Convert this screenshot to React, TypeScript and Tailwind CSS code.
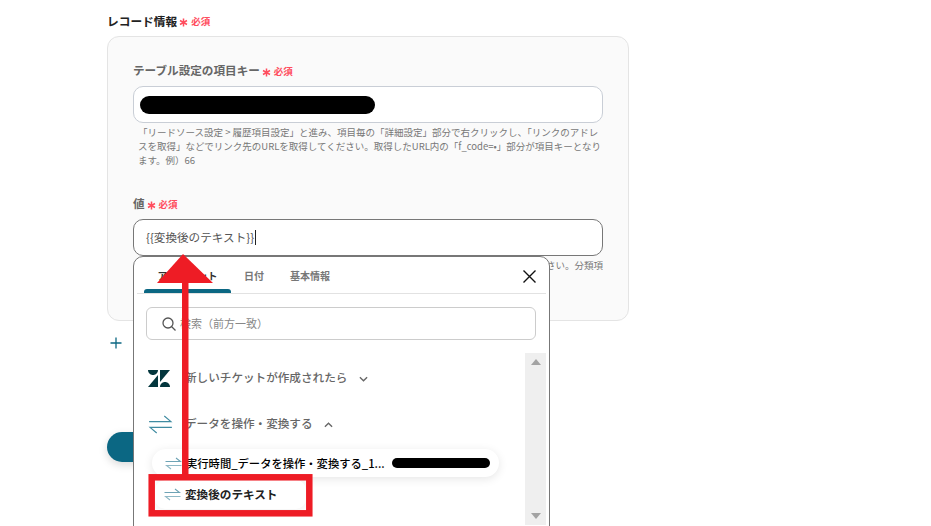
const font = "font-['Noto_Sans_CJK_JP','Noto_Sans',sans-serif]"

function Required() {
  return (
    <span className="ml-[2px] inline-flex items-center text-[#ff4d5e] font-bold">
      <svg viewBox="0 0 9 9" stroke="currentColor" strokeWidth="1.500" className="w-[9px] h-[9px] mt-[3px]">
        <path d="M4.500 0.500v8M1 2.500l7 4M8 2.500l-7 4" />
      </svg>
      <span className="ml-[3px] text-[9.500px] leading-[12px]">必須</span>
    </span>
  )
}

function SwapIcon({ className = "" }: { className?: string }) {
  return (
    <svg viewBox="0 0 26 20" fill="none" stroke="#3f8ba1" strokeWidth="1.200" className={className}>
      <path d="M1 7h23L17 1" />
      <path d="M25 13H2l7 6" />
    </svg>
  )
}

function SmallSwapIcon() {
  return (
    <svg viewBox="0 0 17 13" fill="none" className="w-[17px] h-[13px] shrink-0">
      <path d="M0.500 4.500h15L11 1" stroke="#6ea3b5" strokeWidth="1.100" />
      <path d="M16.500 8.500h-15L6 12" stroke="#8fb9c6" strokeWidth="1.100" />
    </svg>
  )
}

function ZendeskIcon() {
  return (
    <svg viewBox="0 0 22 17" className="w-[22px] h-[17px] shrink-0" fill="#03363d">
      <path d="M10 0H0c0 2.800 2.200 5 5 5s5-2.200 5-5z" />
      <path d="M10 5v12H0z" />
      <path d="M12 17c0-2.800 2.200-5 5-5s5 2.200 5 5z" />
      <path d="M12 12V0h10z" />
    </svg>
  )
}

function Popup() {
  return (
    <div className="absolute left-0 top-[37px] w-[417px] h-[290px] bg-white border border-[#777] rounded-t-[10px] overflow-hidden">
      <div className="mx-[3px] h-[37px] flex border-b border-[#e2e2e2] relative">
        <div className="ml-[7px] w-[87px] h-[36px]">
          <div className="h-[32px] text-center text-[10px] font-bold text-[#333] leading-[37px]">アウトプット</div>
          <div className="h-[4px] bg-[#0b6783] rounded-t-[3px]" />
        </div>
        <div className="ml-[13px] text-[10px] font-bold text-[#777] leading-[37px]">日付</div>
        <div className="ml-[26px] text-[10px] font-bold text-[#777] leading-[37px]">基本情報</div>
        <svg viewBox="0 0 13 13" className="absolute right-[10px] top-[13px] w-[13px] h-[13px]" stroke="#111" strokeWidth="1.400">
          <path d="M0.500 0.500l12 12M12.500 0.500l-12 12" />
        </svg>
      </div>

      <div className="mt-[13px] ml-[12px] mr-[13px] h-[33px] border border-[#ccc] rounded-[6px] flex items-center pl-[15px]">
        <svg viewBox="0 0 14 14" fill="none" stroke="#555" strokeWidth="1.300" className="w-[14px] h-[14px]">
          <circle cx="6" cy="6" r="5" />
          <path d="M9.500 9.500L13.500 13.500" />
        </svg>
        <span className="ml-[4px] text-[11px] text-[#888]">検索（前方一致）</span>
      </div>

      <div className="flex mt-[13px]">
        <div className="flex-1 min-w-0 pl-[14px]">
          <div className="h-[50px] flex items-center">
            <ZendeskIcon />
            <span className="ml-[15px] text-[11.600px] text-[#666] font-medium">新しいチケットが作成されたら</span>
            <svg viewBox="0 0 10 6" fill="none" stroke="#666" strokeWidth="1.500" className="ml-[12px] w-[9px] h-[6px] mt-[2px]">
              <path d="M1 1l4 4 4-4" />
            </svg>
          </div>
          <div className="h-[42px] flex items-center">
            <SwapIcon className="w-[25px] h-[19px] shrink-0" />
            <span className="ml-[12px] text-[11.600px] text-[#666] font-medium">データを操作・変換する</span>
            <svg viewBox="0 0 10 6" fill="none" stroke="#666" strokeWidth="1.500" className="ml-[11px] w-[9px] h-[6px] mt-[2px]">
              <path d="M1 5l4-4 4 4" />
            </svg>
          </div>
          <div className="mt-[4px] ml-[4px] w-[347px] h-[28px] rounded-full bg-white shadow-[0_2px_10px_rgba(0,0,0,0.1)] flex items-center pl-[13px]">
            <SmallSwapIcon />
            <span className="ml-[4px] text-[11.300px] font-medium text-black whitespace-nowrap">実行時間_データを操作・変換する_1...</span>
            <span className="ml-[7px] w-[98px] h-[10px] rounded-full bg-black" />
          </div>
          <div className="mt-[3px] ml-[7px] w-[151px] h-[29px] rounded-[10px] bg-white shadow-[0_1px_6px_rgba(0,0,0,0.06)] flex items-center pl-[9px]">
            <SmallSwapIcon />
            <span className="ml-[4px] text-[11.600px] font-bold text-[#222] whitespace-nowrap">変換後のテキスト</span>
          </div>
        </div>
        <div className="w-[21px] h-[172px] mr-[3px] bg-[#efefef] flex flex-col items-center justify-between py-[6px] shrink-0">
          <span className="w-0 h-0 border-x-[5px] border-x-transparent border-b-[6px] border-b-[#a3a3a3]" />
          <span className="w-0 h-0 border-x-[5px] border-x-transparent border-t-[6px] border-t-[#a3a3a3]" />
        </div>
      </div>
    </div>
  )
}

function Overlay() {
  return (
    <svg viewBox="0 0 931 526" className="absolute inset-0 w-[931px] h-[526px] pointer-events-none">
      <rect x="182" y="280" width="6.500" height="196" fill="#ee1c25" />
      <path d="M157 283L183 254 213 283z" fill="#ee1c25" />
      <rect x="151.700" y="477.300" width="157.600" height="36" fill="none" stroke="#ee1c25" strokeWidth="6.500" />
    </svg>
  )
}

export default function App() {
  return (
    <div className={`${font} relative w-[931px] h-[526px] overflow-hidden bg-white`}>
      <div className="pl-[107px] pt-[12px] w-[629px]">
        <div className="h-[18px] flex items-center text-[11.700px] font-bold text-[#222]">
          レコード情報
          <Required />
        </div>
        <div className="mt-[6px] h-[285px] bg-[#fafafa] border border-[#e4e4e4] rounded-[12px] px-[25px] pt-[25px]">
          <div className="h-[18px] flex items-center text-[11.600px] font-bold text-[#666]">
            テーブル設定の項目キー
            <Required />
          </div>
          <div className="mt-[6px] h-[37px] bg-white border border-[#c9ced6] rounded-[10px] flex items-center pl-[6px]">
            <span className="w-[235px] h-[18px] rounded-full bg-black" />
          </div>
          <p className="mt-[2px] pl-[5px] text-[9.500px] leading-[14px] text-[#777] whitespace-nowrap">
            「リードソース設定 &gt; 履歴項目設定」と進み、項目毎の「詳細設定」部分で右クリックし、「リンクのアドレ
            <br />
            スを取得」などでリンク先のURLを取得してください。取得したURL内の「f_code=•」部分が項目キーとなり
            <br />
            ます。例）66
          </p>

          <div className="mt-[28px] h-[18px] flex items-center text-[11.600px] font-bold text-[#666]">
            値
            <Required />
          </div>
          <div className="relative mt-[6px]">
            <div className="h-[37px] bg-white border border-[#777] rounded-[10px] flex items-center pl-[12px] text-[11.600px] text-[#555]">
              {"{{変換後のテキスト}}"}
              <span className="ml-px w-px h-[15px] bg-[#222]" />
            </div>
            <p className="mt-[2px] text-right text-[9.500px] leading-[14px] text-[#777] whitespace-nowrap overflow-hidden">
              してください。分類項
            </p>
            <Popup />
          </div>
        </div>
        <div className="mt-[16px] ml-[3px] text-[#0b6783]">
          <svg viewBox="0 0 12 12" stroke="currentColor" strokeWidth="1.300" className="w-[12px] h-[12px]">
            <path d="M6 0.500v11M0.500 6h11" />
          </svg>
        </div>
        <div className="mt-[83px] w-[200px] h-[30px] rounded-full bg-[#0b6783] shadow-[0_3px_8px_rgba(0,0,0,0.15)]" />
      </div>
      <Overlay />
    </div>
  )
}
